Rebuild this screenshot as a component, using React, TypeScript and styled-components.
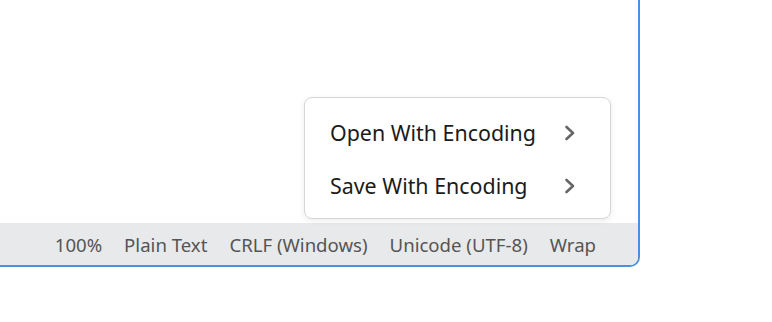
import React from 'react';
import styled, { createGlobalStyle } from 'styled-components';

const GlobalStyle = createGlobalStyle`
  html, body {
    margin: 0;
    padding: 0;
    background: #ffffff;
  }
  body {
    font-family: "Noto Sans", "Open Sans", "DejaVu Sans", sans-serif;
  }
`;

const Window = styled.div`
  position: relative;
  width: 640px;
  height: 267px;
  box-sizing: border-box;
  border-right: 2px solid #4a90e2;
  border-bottom: 2px solid #4a90e2;
  border-bottom-right-radius: 10px;
  display: flex;
  flex-direction: column;
  overflow: hidden;
`;

const Editor = styled.div`
  flex: 1;
  background: #ffffff;
`;

const StatusBar = styled.div`
  height: 42px;
  background: #e8e9ea;
  display: flex;
  align-items: center;
  justify-content: flex-end;
  gap: 22px;
  padding-right: 42px;
  font-size: 18.6px;
  color: #555555;
`;

const StatusItem = styled.span`
  white-space: nowrap;
`;

const Menu = styled.div`
  position: absolute;
  right: 27px;
  bottom: 46px;
  width: 307px;
  box-sizing: border-box;
  background: #ffffff;
  border: 1px solid #d6d6d6;
  border-radius: 8px;
  box-shadow: 0 2px 6px rgba(0, 0, 0, 0.08);
  padding: 8px 0 6px;
  display: flex;
  flex-direction: column;
`;

const MenuItem = styled.div`
  height: 53px;
  display: flex;
  align-items: center;
  justify-content: space-between;
  padding: 0 33px 0 25px;
  font-size: 21.4px;
  color: #1b1b1b;
`;

const Chevron = () => (
  <svg width="14" height="16" viewBox="0 0 14 16">
    <path d="M3.5 2 L10 8 L3.5 14" fill="none" stroke="#666666" strokeWidth="2.6" strokeLinecap="round" strokeLinejoin="round" />
  </svg>
);

const items = ['Open With Encoding', 'Save With Encoding'];
const status = ['100%', 'Plain Text', 'CRLF (Windows)', 'Unicode (UTF-8)', 'Wrap'];

export default function App() {
  return (
    <>
      <GlobalStyle />
      <Window>
        <Editor />
        <StatusBar>
          {status.map((s) => (
            <StatusItem key={s}>{s}</StatusItem>
          ))}
        </StatusBar>
        <Menu>
          {items.map((label) => (
            <MenuItem key={label}>
              <span>{label}</span>
              <Chevron />
            </MenuItem>
          ))}
        </Menu>
      </Window>
    </>
  );
}
